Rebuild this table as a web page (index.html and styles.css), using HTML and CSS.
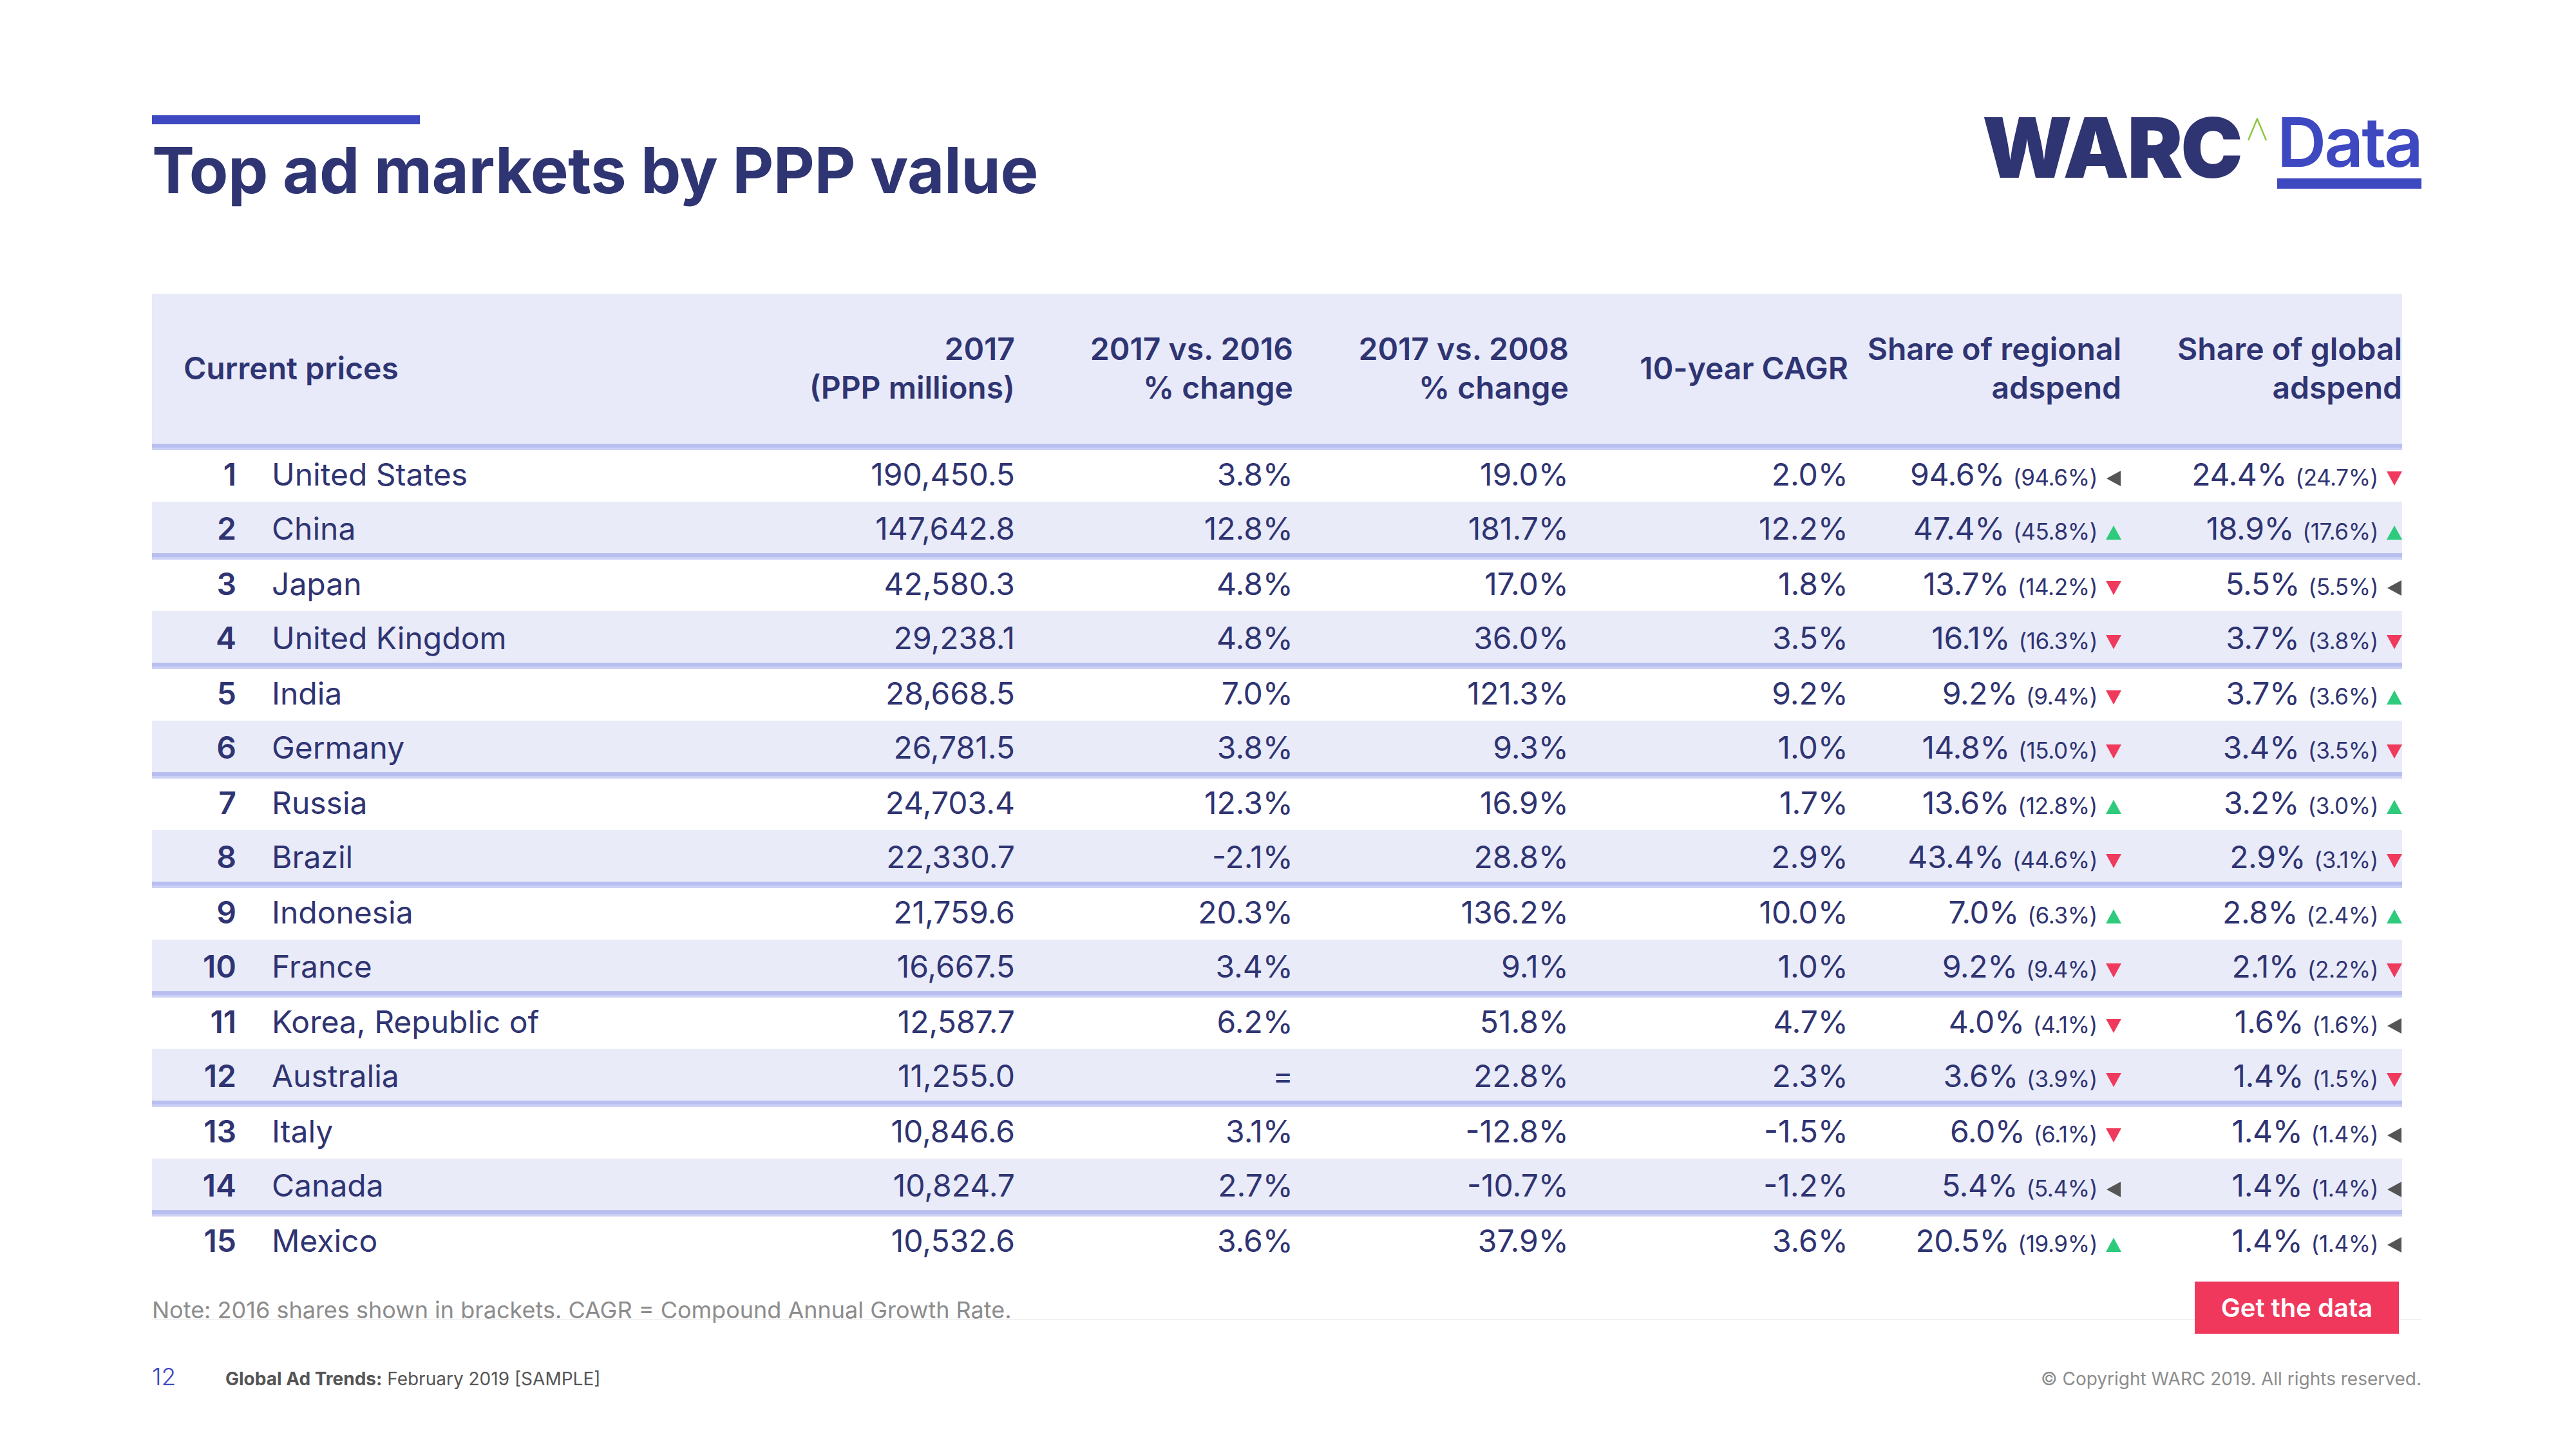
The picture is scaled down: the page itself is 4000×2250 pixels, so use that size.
FILE: index.html
```html
<!DOCTYPE html>
<html lang="en">
<head>
<meta charset="utf-8">
<title>Top ad markets by PPP value</title>
<link rel="stylesheet" href="styles.css">
</head>
<body>
<div class="page">
  <header class="top">
    <div class="title-block">
      <div class="accent"></div>
      <h1>Top ad markets by PPP value</h1>
    </div>
    <div class="logo">
      <span class="warc">WARC</span>
      <svg class="caret" viewBox="0 0 30 36"><polyline points="1,35 15,1.5 29,35" fill="none" stroke="#8dc63f" stroke-width="2.5"/></svg>
      <div class="data"><span>Data</span><div class="uline"></div></div>
    </div>
  </header>

  <div class="grid">
    <div class="row head">
      <div class="c first">Current prices</div>
      <div class="c">2017<br>(PPP millions)</div>
      <div class="c">2017 vs. 2016<br>% change</div>
      <div class="c">2017 vs. 2008<br>% change</div>
      <div class="c">10-year CAGR</div>
      <div class="c">Share of regional<br>adspend</div>
      <div class="c">Share of global<br>adspend</div>
    </div>

    <div class="row"><div class="c rk">1</div><div class="c nm">United States</div><div class="c">190,450.5</div><div class="c">3.8%</div><div class="c">19.0%</div><div class="c">2.0%</div><div class="c sh">94.6% <small>(94.6%)</small><svg class="tri" viewBox="0 0 24 24"><path class="l" d="M1 12L23 0V24Z"/></svg></div><div class="c sh">24.4% <small>(24.7%)</small><svg class="tri" viewBox="0 0 24 24"><path class="d" d="M0 1H24L12 23Z"/></svg></div></div>
    <div class="row alt"><div class="c rk">2</div><div class="c nm">China</div><div class="c">147,642.8</div><div class="c">12.8%</div><div class="c">181.7%</div><div class="c">12.2%</div><div class="c sh">47.4% <small>(45.8%)</small><svg class="tri" viewBox="0 0 24 24"><path class="u" d="M0 23H24L12 1Z"/></svg></div><div class="c sh">18.9% <small>(17.6%)</small><svg class="tri" viewBox="0 0 24 24"><path class="u" d="M0 23H24L12 1Z"/></svg></div></div>
    <div class="row"><div class="c rk">3</div><div class="c nm">Japan</div><div class="c">42,580.3</div><div class="c">4.8%</div><div class="c">17.0%</div><div class="c">1.8%</div><div class="c sh">13.7% <small>(14.2%)</small><svg class="tri" viewBox="0 0 24 24"><path class="d" d="M0 1H24L12 23Z"/></svg></div><div class="c sh">5.5% <small>(5.5%)</small><svg class="tri" viewBox="0 0 24 24"><path class="l" d="M1 12L23 0V24Z"/></svg></div></div>
    <div class="row alt"><div class="c rk">4</div><div class="c nm">United Kingdom</div><div class="c">29,238.1</div><div class="c">4.8%</div><div class="c">36.0%</div><div class="c">3.5%</div><div class="c sh">16.1% <small>(16.3%)</small><svg class="tri" viewBox="0 0 24 24"><path class="d" d="M0 1H24L12 23Z"/></svg></div><div class="c sh">3.7% <small>(3.8%)</small><svg class="tri" viewBox="0 0 24 24"><path class="d" d="M0 1H24L12 23Z"/></svg></div></div>
    <div class="row"><div class="c rk">5</div><div class="c nm">India</div><div class="c">28,668.5</div><div class="c">7.0%</div><div class="c">121.3%</div><div class="c">9.2%</div><div class="c sh">9.2% <small>(9.4%)</small><svg class="tri" viewBox="0 0 24 24"><path class="d" d="M0 1H24L12 23Z"/></svg></div><div class="c sh">3.7% <small>(3.6%)</small><svg class="tri" viewBox="0 0 24 24"><path class="u" d="M0 23H24L12 1Z"/></svg></div></div>
    <div class="row alt"><div class="c rk">6</div><div class="c nm">Germany</div><div class="c">26,781.5</div><div class="c">3.8%</div><div class="c">9.3%</div><div class="c">1.0%</div><div class="c sh">14.8% <small>(15.0%)</small><svg class="tri" viewBox="0 0 24 24"><path class="d" d="M0 1H24L12 23Z"/></svg></div><div class="c sh">3.4% <small>(3.5%)</small><svg class="tri" viewBox="0 0 24 24"><path class="d" d="M0 1H24L12 23Z"/></svg></div></div>
    <div class="row"><div class="c rk">7</div><div class="c nm">Russia</div><div class="c">24,703.4</div><div class="c">12.3%</div><div class="c">16.9%</div><div class="c">1.7%</div><div class="c sh">13.6% <small>(12.8%)</small><svg class="tri" viewBox="0 0 24 24"><path class="u" d="M0 23H24L12 1Z"/></svg></div><div class="c sh">3.2% <small>(3.0%)</small><svg class="tri" viewBox="0 0 24 24"><path class="u" d="M0 23H24L12 1Z"/></svg></div></div>
    <div class="row alt"><div class="c rk">8</div><div class="c nm">Brazil</div><div class="c">22,330.7</div><div class="c">-2.1%</div><div class="c">28.8%</div><div class="c">2.9%</div><div class="c sh">43.4% <small>(44.6%)</small><svg class="tri" viewBox="0 0 24 24"><path class="d" d="M0 1H24L12 23Z"/></svg></div><div class="c sh">2.9% <small>(3.1%)</small><svg class="tri" viewBox="0 0 24 24"><path class="d" d="M0 1H24L12 23Z"/></svg></div></div>
    <div class="row"><div class="c rk">9</div><div class="c nm">Indonesia</div><div class="c">21,759.6</div><div class="c">20.3%</div><div class="c">136.2%</div><div class="c">10.0%</div><div class="c sh">7.0% <small>(6.3%)</small><svg class="tri" viewBox="0 0 24 24"><path class="u" d="M0 23H24L12 1Z"/></svg></div><div class="c sh">2.8% <small>(2.4%)</small><svg class="tri" viewBox="0 0 24 24"><path class="u" d="M0 23H24L12 1Z"/></svg></div></div>
    <div class="row alt"><div class="c rk">10</div><div class="c nm">France</div><div class="c">16,667.5</div><div class="c">3.4%</div><div class="c">9.1%</div><div class="c">1.0%</div><div class="c sh">9.2% <small>(9.4%)</small><svg class="tri" viewBox="0 0 24 24"><path class="d" d="M0 1H24L12 23Z"/></svg></div><div class="c sh">2.1% <small>(2.2%)</small><svg class="tri" viewBox="0 0 24 24"><path class="d" d="M0 1H24L12 23Z"/></svg></div></div>
    <div class="row"><div class="c rk">11</div><div class="c nm">Korea, Republic of</div><div class="c">12,587.7</div><div class="c">6.2%</div><div class="c">51.8%</div><div class="c">4.7%</div><div class="c sh">4.0% <small>(4.1%)</small><svg class="tri" viewBox="0 0 24 24"><path class="d" d="M0 1H24L12 23Z"/></svg></div><div class="c sh">1.6% <small>(1.6%)</small><svg class="tri" viewBox="0 0 24 24"><path class="l" d="M1 12L23 0V24Z"/></svg></div></div>
    <div class="row alt"><div class="c rk">12</div><div class="c nm">Australia</div><div class="c">11,255.0</div><div class="c">=</div><div class="c">22.8%</div><div class="c">2.3%</div><div class="c sh">3.6% <small>(3.9%)</small><svg class="tri" viewBox="0 0 24 24"><path class="d" d="M0 1H24L12 23Z"/></svg></div><div class="c sh">1.4% <small>(1.5%)</small><svg class="tri" viewBox="0 0 24 24"><path class="d" d="M0 1H24L12 23Z"/></svg></div></div>
    <div class="row"><div class="c rk">13</div><div class="c nm">Italy</div><div class="c">10,846.6</div><div class="c">3.1%</div><div class="c">-12.8%</div><div class="c">-1.5%</div><div class="c sh">6.0% <small>(6.1%)</small><svg class="tri" viewBox="0 0 24 24"><path class="d" d="M0 1H24L12 23Z"/></svg></div><div class="c sh">1.4% <small>(1.4%)</small><svg class="tri" viewBox="0 0 24 24"><path class="l" d="M1 12L23 0V24Z"/></svg></div></div>
    <div class="row alt"><div class="c rk">14</div><div class="c nm">Canada</div><div class="c">10,824.7</div><div class="c">2.7%</div><div class="c">-10.7%</div><div class="c">-1.2%</div><div class="c sh">5.4% <small>(5.4%)</small><svg class="tri" viewBox="0 0 24 24"><path class="l" d="M1 12L23 0V24Z"/></svg></div><div class="c sh">1.4% <small>(1.4%)</small><svg class="tri" viewBox="0 0 24 24"><path class="l" d="M1 12L23 0V24Z"/></svg></div></div>
    <div class="row"><div class="c rk">15</div><div class="c nm">Mexico</div><div class="c">10,532.6</div><div class="c">3.6%</div><div class="c">37.9%</div><div class="c">3.6%</div><div class="c sh">20.5% <small>(19.9%)</small><svg class="tri" viewBox="0 0 24 24"><path class="u" d="M0 23H24L12 1Z"/></svg></div><div class="c sh">1.4% <small>(1.4%)</small><svg class="tri" viewBox="0 0 24 24"><path class="l" d="M1 12L23 0V24Z"/></svg></div></div>
  </div>

  <div class="note-row">
    <div class="note">Note: 2016 shares shown in brackets. CAGR = Compound Annual Growth Rate.</div>
    <div class="btn">Get the data</div>
  </div>

  <footer class="footer">
    <span class="pg">12</span>
    <span class="src"><b>Global Ad Trends:</b> February 2019 [SAMPLE]</span>
    <span class="copy">© Copyright WARC 2019. All rights reserved.</span>
  </footer>
</div>
</body>
</html>
```

FILE: styles.css
```css
* { box-sizing: border-box; }
html, body { margin: 0; padding: 0; background: #ffffff; }
body {
  width: 4000px;
  height: 2250px;
  overflow: hidden;
  font-family: Inter, "Noto Sans", "Liberation Sans", sans-serif;
  color: #2f3472;
}
.page { padding: 165px 240px 0 236px; }

/* header */
.top { display: flex; justify-content: space-between; align-items: flex-start; }
.accent { width: 416px; height: 14px; margin-top: 14px; background: #3d48c1; }
h1 {
  margin: 12px 0 0;
  font-size: 99px;
  line-height: 1.2;
  font-weight: 700;
  letter-spacing: -0.5px;
  color: #2f3472;
}
.logo { display: flex; align-items: flex-start; }
.warc {
  font-size: 129px;
  line-height: 1;
  font-weight: 900;
  letter-spacing: -3px;
  color: #2f3472;
}
.caret { width: 30px; height: 36px; margin: 18px 0 0 10px; }
.data { margin: 3px 0 0 16px; }
.data span {
  display: block;
  font-size: 106px;
  line-height: 1;
  font-weight: 600;
  letter-spacing: -3px;
  color: #3d48c1;
}
.uline { height: 16px; margin-top: 3px; background: #3d48c1; }

/* table */
.grid { margin-top: 132px; width: 3494px; }
.row {
  display: grid;
  grid-template-columns: 131px 833px 376px 432px 428px 434px 424px 436px;
  align-items: center;
  height: 80px;
  padding-bottom: 5px;
  font-size: 48px;
  line-height: 1.2;
  background: #ffffff;
}
.row.alt {
  height: 90px;
  padding: 3px 0 10px;
  background: linear-gradient(to bottom, #e9ebf9 0, #e9ebf9 80px, #b8bff0 80px, #b8bff0 86px, #ccd1f5 86px);
}
.row.head {
  height: 243px;
  padding: 0 0 10px;
  font-weight: 600;
  line-height: 60px;
  background: linear-gradient(to bottom, #e8eaf9 0, #e8eaf9 233px, #b8bff0 233px, #b8bff0 239px, #ccd1f5 239px);
}
.c { text-align: right; white-space: nowrap; }
.head .first { grid-column: span 2; text-align: left; padding-left: 49px; }
.rk { font-weight: 600; }
.nm { text-align: left; padding-left: 55px; }
.sh { letter-spacing: -0.4px; }
small { font-size: 35px; }
.tri { width: 24px; height: 24px; margin-left: 13px; vertical-align: -1px; }
.tri .l { fill: #555555; }
.tri .d { fill: #ef3a5d; }
.tri .u { fill: #2ecb7c; }

/* note */
.note-row {
  display: flex;
  justify-content: space-between;
  align-items: center;
  margin-top: 21px;
  background: linear-gradient(#f2f2f2, #f2f2f2) no-repeat 0 58px / 100% 2px;
}
.note { padding-top: 8px; font-size: 36px; line-height: 1.2; color: #8c8c8c; }
.btn {
  width: 317px;
  height: 81px;
  margin-right: 35px;
  display: flex;
  align-items: center;
  justify-content: center;
  background: #ef385c;
  color: #ffffff;
  font-size: 40px;
  font-weight: 600;
}

/* footer */
.footer { display: flex; align-items: baseline; margin-top: 45px; }
.pg { width: 114px; font-size: 37px; line-height: 1.2; font-weight: 300; color: #3d48c1; }
.src { font-size: 28px; color: #555555; }
.src b { font-weight: 700; }
.copy { margin-left: auto; font-size: 28px; color: #8c8c8c; }
```
